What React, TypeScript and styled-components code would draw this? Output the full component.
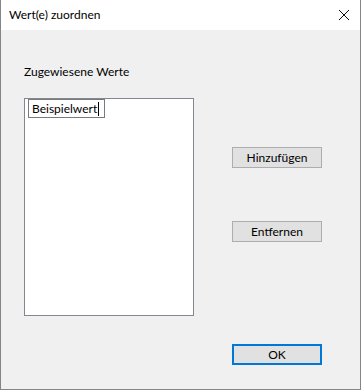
import React from 'react';
import styled, { createGlobalStyle } from 'styled-components';

const GlobalStyle = createGlobalStyle`
  html, body {
    margin: 0;
    padding: 0;
    background: #f0f0f0;
  }
  body {
    font-family: "Segoe UI", Lato, "Liberation Sans", Arial, sans-serif;
    font-size: 12px;
    color: #000;
  }
`;

const Window = styled.div`
  width: 361px;
  height: 390px;
  box-sizing: border-box;
  border: 1px solid #858585;
  border-top: none;
  background: #f0f0f0;
  display: flex;
  flex-direction: column;
`;

const TitleBar = styled.div`
  height: 30px;
  flex-shrink: 0;
  background: #ffffff;
  display: flex;
  align-items: center;
  justify-content: space-between;
  padding: 0 10px 0 8px;
`;

const Title = styled.span`
  font-size: 12px;
  line-height: 15px;
  margin-top: -1px;
`;

const CloseIcon = styled.svg`
  width: 12px;
  height: 12px;
  margin-top: -1px;
`;

const Body = styled.div`
  flex: 1;
  display: flex;
  padding: 34px 0 0 23px;
`;

const LeftColumn = styled.div`
  display: flex;
  flex-direction: column;
  width: 170px;
`;

const Label = styled.div`
  line-height: 15px;
  margin-bottom: 19px;
`;

const ListBox = styled.div`
  width: 170px;
  height: 218px;
  box-sizing: border-box;
  border: 1px solid #828790;
  background: #ffffff;
  padding: 0 0 0 3px;
`;

const EditBox = styled.div`
  width: 77px;
  height: 19px;
  box-sizing: border-box;
  border: 1px solid #7a7a7a;
  background: #ffffff;
  display: flex;
  align-items: center;
  padding-left: 3px;
  line-height: 15px;
`;

const Caret = styled.span`
  display: inline-block;
  width: 1px;
  height: 14px;
  background: #000;
  margin-left: 1px;
`;

const RightColumn = styled.div`
  display: flex;
  flex-direction: column;
  margin-left: 38px;
`;

const Button = styled.button<{ $default?: boolean; $gap: number }>`
  width: 90px;
  height: 21px;
  margin-top: ${p => p.$gap}px;
  box-sizing: border-box;
  border: ${p => (p.$default ? '2px solid #0078d7' : '1px solid #adadad')};
  background: #e1e1e1;
  font-family: inherit;
  font-size: 12px;
  color: #000;
  padding: 0;
  line-height: 15px;
  cursor: default;
`;

const App: React.FC = () => {
  return (
    <>
      <GlobalStyle />
      <Window>
        <TitleBar>
          <Title>Wert(e) zuordnen</Title>
          <CloseIcon viewBox="0 0 12 12">
            <path d="M1 1 L11 11 M11 1 L1 11" stroke="#111" strokeWidth="1" fill="none" />
          </CloseIcon>
        </TitleBar>
        <Body>
          <LeftColumn>
            <Label>Zugewiesene Werte</Label>
            <ListBox>
              <EditBox>
                Beispielwert
                <Caret />
              </EditBox>
            </ListBox>
          </LeftColumn>
          <RightColumn>
            <Button $gap={83}>Hinzufügen</Button>
            <Button $gap={53}>Entfernen</Button>
            <Button $gap={102} $default>OK</Button>
          </RightColumn>
        </Body>
      </Window>
    </>
  );
};

export default App;
